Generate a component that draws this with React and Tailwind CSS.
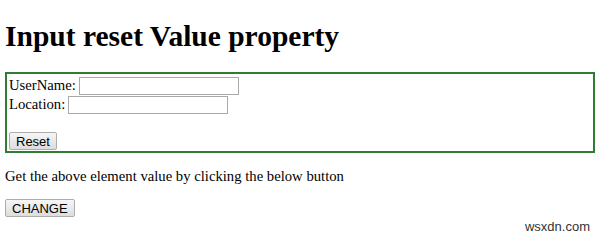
export default function App() {
  const inputCls = 'h-[18px] w-[160px] border border-[#a9a9a9] bg-white align-middle'
  const btnCls =
    'border border-[#adadad] rounded-[2px] bg-gradient-to-b from-[#f6f6f6] to-[#dddddd] px-[6px] h-[18px] text-[13px] leading-none text-black'

  return (
    <div className="relative h-[239px] w-[600px] bg-white px-[5px] text-[14.7px] text-black font-['Liberation_Serif',serif]">
      <h1 className="pt-[18px] text-[29.5px] font-bold leading-[36px]">Input reset Value property</h1>

      <form className="mt-[18px] border-2 border-[#2e7d32] px-[2px] pt-[2px] pb-[1px] leading-[19px]">
        <div className="flex items-center gap-[3px]">
          <span>UserName:</span>
          <input className={inputCls} />
        </div>
        <div className="flex items-center gap-[3px]">
          <span>Location:</span>
          <input className={inputCls} />
        </div>
        <div className="h-[18px]" />
        <button type="button" className={`${btnCls} block font-['Liberation_Sans',sans-serif]`}>
          Reset
        </button>
      </form>

      <p className="mt-[14px] leading-[19px]">Get the above element value by clicking the below button</p>

      <button type="button" className={`${btnCls} mt-[13px] font-['Liberation_Sans',sans-serif]`}>
        CHANGE
      </button>

      <span className="absolute right-[10px] bottom-[3px] text-[13px] text-[#333] font-['Liberation_Sans',sans-serif]">
        wsxdn.com
      </span>
    </div>
  )
}
